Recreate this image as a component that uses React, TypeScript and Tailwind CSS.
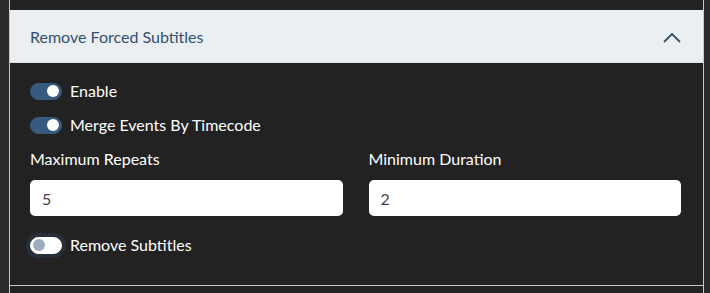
import { useState } from 'react';

function Toggle({ checked, focused, label, onChange }: { checked: boolean; focused?: boolean; label: string; onChange: () => void }) {
  return (
    <label className="flex h-[22px] items-center gap-[8px] cursor-pointer">
      <span
        onClick={onChange}
        className={
          'relative flex h-[17px] w-[32px] shrink-0 items-center rounded-full border px-[2px] ' +
          (checked ? 'border-[#375a7f] bg-[#375a7f] justify-end' : 'border-[#ffffff] bg-white justify-start') +
          (focused ? ' shadow-[0_0_0_4px_rgba(55,90,127,0.25)]' : '')
        }
      >
        <span className={'block h-[12px] w-[12px] rounded-full ' + (checked ? 'bg-white' : 'bg-[#9badbf]')} />
      </span>
      <span className="text-[16px] leading-[22px] text-white">{label}</span>
    </label>
  );
}

export default function App() {
  const [enable, setEnable] = useState(true);
  const [merge, setMerge] = useState(true);
  const [remove, setRemove] = useState(false);
  const [repeats, setRepeats] = useState('5');
  const [duration, setDuration] = useState('2');

  return (
    <div className="h-[293px] w-[710px] overflow-hidden bg-[#2b2b2b] pl-[9px] pr-[6px]" style={{ fontFamily: 'Lato, "Open Sans", sans-serif' }}>
      <div className="h-full border-x border-[#c8c8c8] bg-[#222222] pt-[10px]">
        <button
          type="button"
          className="flex h-[53px] w-full items-center justify-between border-b border-[#dee2e6] bg-[#ebeff2] pl-[20px] pr-[22px] pt-[2px] text-left"
        >
          <span className="text-[16px] text-[#32516f]">Remove Forced Subtitles</span>
          <svg width="18" height="11" viewBox="0 0 18 11" fill="none">
            <polyline points="1,10 9,2 17,10" stroke="#32516f" strokeWidth="1.8" />
          </svg>
        </button>
        <div className="flex flex-col border-b border-[#c8c8c8] pl-[20px] pr-[22px] pb-[29px] pt-[17px]">
          <Toggle checked={enable} label="Enable" onChange={() => setEnable(!enable)} />
          <div className="mt-[12px]">
            <Toggle checked={merge} label="Merge Events By Timecode" onChange={() => setMerge(!merge)} />
          </div>
          <div className="mt-[12px] grid grid-cols-2 gap-x-[26px]">
            <div className="flex flex-col">
              <span className="text-[16px] leading-[22px] text-white">Maximum Repeats</span>
              <input
                value={repeats}
                onChange={e => setRepeats(e.target.value)}
                className="mt-[10px] h-[36px] w-full rounded-[5px] bg-white px-[12px] text-[16px] text-[#444] outline-none"
                style={{ fontFamily: 'Lato, sans-serif' }}
              />
            </div>
            <div className="flex flex-col">
              <span className="text-[16px] leading-[22px] text-white">Minimum Duration</span>
              <input
                value={duration}
                onChange={e => setDuration(e.target.value)}
                className="mt-[10px] h-[36px] w-full rounded-[5px] bg-white px-[12px] text-[16px] text-[#444] outline-none"
                style={{ fontFamily: 'Lato, sans-serif' }}
              />
            </div>
          </div>
          <div className="mt-[18px]">
            <Toggle checked={remove} focused label="Remove Subtitles" onChange={() => setRemove(!remove)} />
          </div>
        </div>
      </div>
    </div>
  );
}
